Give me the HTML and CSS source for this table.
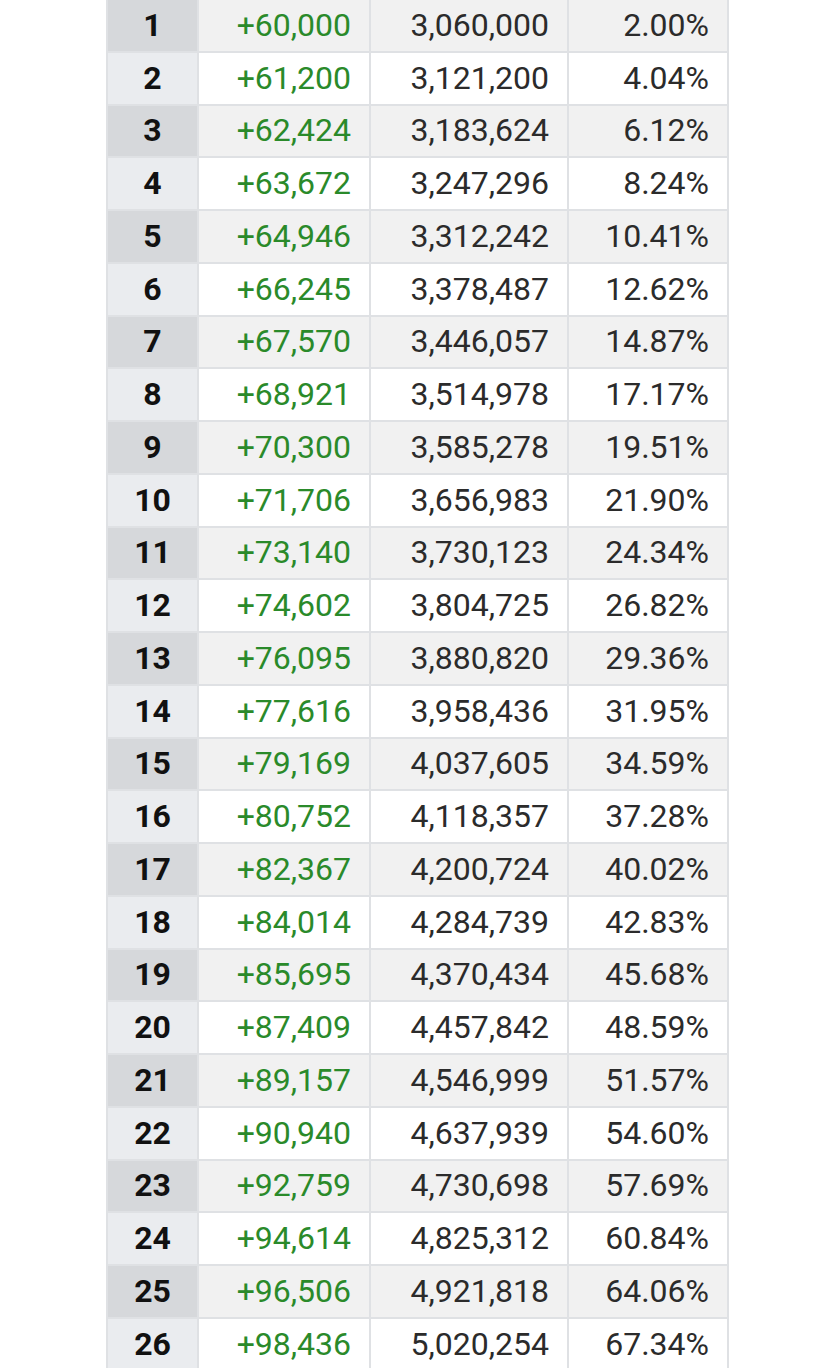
FILE: index.html
```html
<!DOCTYPE html>
<html lang="en">
<head>
<meta charset="utf-8">
<title>Growth table</title>
<link rel="stylesheet" href="styles.css">
</head>
<body>
<div class="table">
  <div class="row"><div class="idx">1</div><div class="cell up">+60,000</div><div class="cell">3,060,000</div><div class="cell">2.00%</div></div>
  <div class="row"><div class="idx">2</div><div class="cell up">+61,200</div><div class="cell">3,121,200</div><div class="cell">4.04%</div></div>
  <div class="row"><div class="idx">3</div><div class="cell up">+62,424</div><div class="cell">3,183,624</div><div class="cell">6.12%</div></div>
  <div class="row"><div class="idx">4</div><div class="cell up">+63,672</div><div class="cell">3,247,296</div><div class="cell">8.24%</div></div>
  <div class="row"><div class="idx">5</div><div class="cell up">+64,946</div><div class="cell">3,312,242</div><div class="cell">10.41%</div></div>
  <div class="row"><div class="idx">6</div><div class="cell up">+66,245</div><div class="cell">3,378,487</div><div class="cell">12.62%</div></div>
  <div class="row"><div class="idx">7</div><div class="cell up">+67,570</div><div class="cell">3,446,057</div><div class="cell">14.87%</div></div>
  <div class="row"><div class="idx">8</div><div class="cell up">+68,921</div><div class="cell">3,514,978</div><div class="cell">17.17%</div></div>
  <div class="row"><div class="idx">9</div><div class="cell up">+70,300</div><div class="cell">3,585,278</div><div class="cell">19.51%</div></div>
  <div class="row"><div class="idx">10</div><div class="cell up">+71,706</div><div class="cell">3,656,983</div><div class="cell">21.90%</div></div>
  <div class="row"><div class="idx">11</div><div class="cell up">+73,140</div><div class="cell">3,730,123</div><div class="cell">24.34%</div></div>
  <div class="row"><div class="idx">12</div><div class="cell up">+74,602</div><div class="cell">3,804,725</div><div class="cell">26.82%</div></div>
  <div class="row"><div class="idx">13</div><div class="cell up">+76,095</div><div class="cell">3,880,820</div><div class="cell">29.36%</div></div>
  <div class="row"><div class="idx">14</div><div class="cell up">+77,616</div><div class="cell">3,958,436</div><div class="cell">31.95%</div></div>
  <div class="row"><div class="idx">15</div><div class="cell up">+79,169</div><div class="cell">4,037,605</div><div class="cell">34.59%</div></div>
  <div class="row"><div class="idx">16</div><div class="cell up">+80,752</div><div class="cell">4,118,357</div><div class="cell">37.28%</div></div>
  <div class="row"><div class="idx">17</div><div class="cell up">+82,367</div><div class="cell">4,200,724</div><div class="cell">40.02%</div></div>
  <div class="row"><div class="idx">18</div><div class="cell up">+84,014</div><div class="cell">4,284,739</div><div class="cell">42.83%</div></div>
  <div class="row"><div class="idx">19</div><div class="cell up">+85,695</div><div class="cell">4,370,434</div><div class="cell">45.68%</div></div>
  <div class="row"><div class="idx">20</div><div class="cell up">+87,409</div><div class="cell">4,457,842</div><div class="cell">48.59%</div></div>
  <div class="row"><div class="idx">21</div><div class="cell up">+89,157</div><div class="cell">4,546,999</div><div class="cell">51.57%</div></div>
  <div class="row"><div class="idx">22</div><div class="cell up">+90,940</div><div class="cell">4,637,939</div><div class="cell">54.60%</div></div>
  <div class="row"><div class="idx">23</div><div class="cell up">+92,759</div><div class="cell">4,730,698</div><div class="cell">57.69%</div></div>
  <div class="row"><div class="idx">24</div><div class="cell up">+94,614</div><div class="cell">4,825,312</div><div class="cell">60.84%</div></div>
  <div class="row"><div class="idx">25</div><div class="cell up">+96,506</div><div class="cell">4,921,818</div><div class="cell">64.06%</div></div>
  <div class="row"><div class="idx">26</div><div class="cell up">+98,436</div><div class="cell">5,020,254</div><div class="cell">67.34%</div></div>
</div>
</body>
</html>
```
FILE: styles.css
```css
html, body {
  margin: 0;
  padding: 0;
  background: #ffffff;
}
body {
  font-family: Roboto, "Noto Sans", sans-serif;
  overflow: hidden;
}
.table {
  width: 623px;
  margin: -2px 0 0 106px;
  padding: 2px;
  box-sizing: border-box;
  background: #dfe1e4;
  display: flex;
  flex-direction: column;
  gap: 2px;
}
.row {
  display: grid;
  grid-template-columns: 89px 170px 196px 158px;
  column-gap: 2px;
  height: 50.76px;
}
.idx, .cell {
  display: flex;
  align-items: center;
  font-size: 32px;
  line-height: 1;
  padding-bottom: 1px;
}
.idx {
  justify-content: center;
  font-weight: 700;
  color: #111111;
  background: #eaecef;
}
.cell {
  justify-content: flex-end;
  padding-right: 18px;
  color: #2b2b2b;
  background: #ffffff;
}
.cell.up {
  color: #2a8a2a;
}
.row:nth-child(odd) .idx {
  background: #d6d8db;
}
.row:nth-child(odd) .cell {
  background: #f1f1f1;
}
```
